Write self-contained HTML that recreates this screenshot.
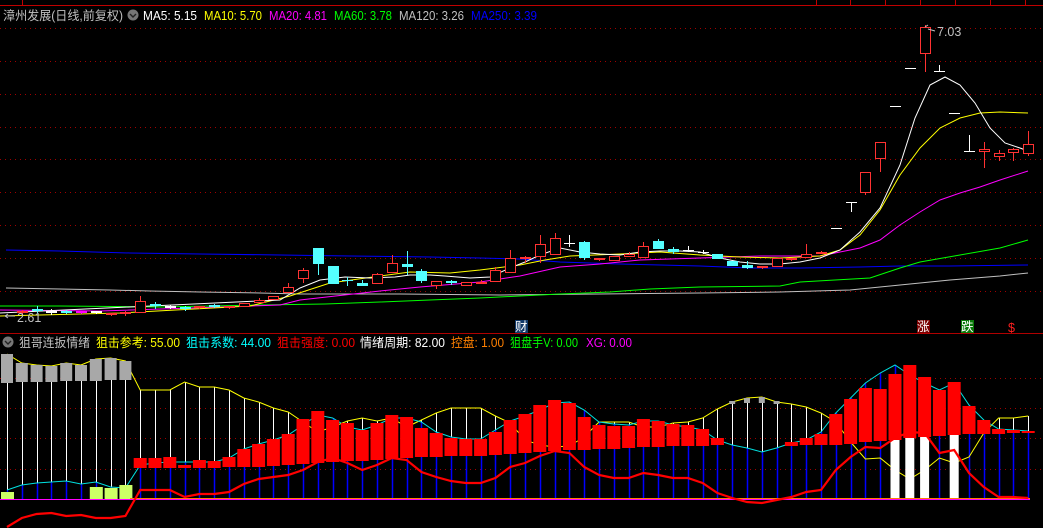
<!DOCTYPE html>
<html><head><meta charset="utf-8"><style>
html,body{margin:0;padding:0;background:#000;width:1043px;height:528px;overflow:hidden}
svg{display:block}
text{font-family:"Liberation Sans","Noto Sans CJK SC",sans-serif;font-size:12.5px}
</style></head><body>
<svg id="s" width="1043" height="528" xmlns="http://www.w3.org/2000/svg">
<rect width="1043" height="528" fill="#000"/>
<g id="g"></g>
<line x1="0" y1="5.5" x2="1043" y2="5.5" stroke="#c00000"/>
<line x1="22.5" y1="0" x2="22.5" y2="5" stroke="#c00000"/>
<g stroke="#c00000"><line x1="816.5" y1="0" x2="816.5" y2="5"/><line x1="850.5" y1="0" x2="850.5" y2="5"/><line x1="885.5" y1="0" x2="885.5" y2="5"/><line x1="920.5" y1="0" x2="920.5" y2="5"/><line x1="955.5" y1="0" x2="955.5" y2="5"/><line x1="990.5" y1="0" x2="990.5" y2="5"/><line x1="1025.5" y1="0" x2="1025.5" y2="5"/></g>
<line x1="0" y1="333.5" x2="1043" y2="333.5" stroke="#b00000"/>
<text x="3" y="20" fill="#c0c0c0" textLength="120" lengthAdjust="spacingAndGlyphs">漳州发展(日线,前复权)</text>
<text x="143" y="20" fill="#fff" textLength="54" lengthAdjust="spacingAndGlyphs">MA5: 5.15</text>
<text x="204" y="20" fill="#ffff00" textLength="58" lengthAdjust="spacingAndGlyphs">MA10: 5.70</text>
<text x="269" y="20" fill="#ff00ff" textLength="58" lengthAdjust="spacingAndGlyphs">MA20: 4.81</text>
<text x="334" y="20" fill="#00ff00" textLength="58" lengthAdjust="spacingAndGlyphs">MA60: 3.78</text>
<text x="399" y="20" fill="#c0c0c0" textLength="65" lengthAdjust="spacingAndGlyphs">MA120: 3.26</text>
<text x="471" y="20" fill="#0000ff" textLength="66" lengthAdjust="spacingAndGlyphs">MA250: 3.39</text>
<text x="19" y="347" fill="#c0c0c0" textLength="71" lengthAdjust="spacingAndGlyphs">狙哥连扳情绪</text>
<text x="96" y="347" fill="#ffff00" textLength="84" lengthAdjust="spacingAndGlyphs">狙击参考: 55.00</text>
<text x="186" y="347" fill="#00ffff" textLength="85" lengthAdjust="spacingAndGlyphs">狙击系数: 44.00</text>
<text x="277" y="347" fill="#ff0000" textLength="78" lengthAdjust="spacingAndGlyphs">狙击强度: 0.00</text>
<text x="360" y="347" fill="#ffffff" textLength="85" lengthAdjust="spacingAndGlyphs">情绪周期: 82.00</text>
<text x="451" y="347" fill="#ff8000" textLength="53" lengthAdjust="spacingAndGlyphs">控盘: 1.00</text>
<text x="510" y="347" fill="#00ff00" textLength="68" lengthAdjust="spacingAndGlyphs">狙盘手V: 0.00</text>
<text x="586" y="347" fill="#ff00ff" textLength="46" lengthAdjust="spacingAndGlyphs">XG: 0.00</text>
<circle cx="133" cy="15" r="5.5" fill="#777"/><path d="M130 14 l3 3 l3 -3" stroke="#222" fill="none" stroke-width="1.4"/>
<circle cx="8" cy="342" r="5.5" fill="#777"/><path d="M5 341 l3 3 l3 -3" stroke="#222" fill="none" stroke-width="1.4"/>
<text x="937" y="36" fill="#c0c0c0">7.03</text>
<path d="M925 27 l3 -2 M928 29 l7 2" stroke="#c0c0c0" fill="none"/>
<text x="17" y="322" fill="#c0c0c0">2.61</text>
<path d="M5 316 h10 M5 316 l3 -2 M5 316 l3 2" stroke="#c0c0c0" fill="none"/>
<rect x="515" y="320" width="13" height="13" fill="#123a6a"/><text x="515" y="331" fill="#fff" font-size="12">财</text>
<rect x="917" y="320" width="13" height="13" fill="#7a0000"/><text x="917" y="331" fill="#fff" font-size="12">涨</text>
<rect x="961" y="320" width="13" height="13" fill="#0a7a0a"/><text x="961" y="331" fill="#fff" font-size="12">跌</text>
<text x="1008" y="332" fill="#ff2020" font-size="12">$</text>
</svg>
<script>
(function(){
var g=document.getElementById('g'),h='';
function X(i){return 7+14.8*i;}
[28,61,94,127,159,192,225,258,291].forEach(function(y){h+='<line x1="0" y1="'+(y+.5)+'" x2="1043" y2="'+(y+.5)+'" stroke="#a00000" stroke-dasharray="1 4"/>';});
[378,408,438,469].forEach(function(y){h+='<line x1="0" y1="'+(y+.5)+'" x2="1043" y2="'+(y+.5)+'" stroke="#a00000" stroke-dasharray="1 4"/>';});
function pl(pts,c,w){h+='<polyline fill="none" stroke="'+c+'" stroke-width="'+(w||1)+'" points="'+pts.map(function(p){return p.join(',')}).join(' ')+'"/>';}
pl([[6,250],[60,251],[130,253],[200,254],[280,255],[350,256],[430,257],[480,258],[520,259],[560,262],[620,264],[700,266],[750,268],[800,268],[860,267],[900,266],[950,266],[1028,265]],'#0000ff');
pl([[6,288],[60,289],[110,290],[150,291],[200,292],[260,293],[300,294],[400,294],[500,295],[600,294],[700,293],[780,292],[850,290],[870,288],[900,285],[950,280],[1000,276],[1028,273]],'#c0c0c0');
pl([[0,306],[60,306],[160,307],[260,305],[325,304],[380,302],[430,300],[480,298],[520,296],[560,294],[610,292],[650,289],[700,287],[780,286],[800,282],[870,278],[900,268],[920,262],[960,255],[1000,248],[1028,240]],'#00ff00');
pl([[0,310],[100,311],[280,305],[300,300],[380,291],[420,287],[480,282],[520,276],[560,267],[600,264],[640,260],[700,258],[760,256],[820,256],[860,248],[880,240],[900,225],[920,212],[940,200],[960,193],[980,187],[1000,180],[1028,171]],'#ff00ff');
pl([[0,316],[120,313],[250,306],[290,296],[330,283],[380,276],[410,272],[450,273],[480,270],[520,265],[545,260],[570,256],[620,254],[660,252],[700,255],[740,257],[780,258],[820,256],[840,250],[860,235],[880,210],[900,175],[920,148],[940,128],[960,118],[980,113],[1000,112],[1028,113]],'#ffff00');
pl([[0,313],[280,300],[300,288],[320,280],[345,277],[370,278],[395,277],[410,275],[430,275],[445,276],[470,278],[490,277],[510,268],[525,262],[540,255],[560,248],[580,252],[600,254],[620,255],[640,252],[660,251],[680,251],[700,252],[720,258],[740,262],[760,264],[780,264],[800,262],[820,258],[840,250],[860,232],[880,208],[900,165],[915,118],[930,85],[945,77],[960,85],[975,103],[990,128],[1005,143],[1020,148],[1028,151]],'#ffffff');
var C=[[1,311,313,310,315,'r'],[2,309,311,306,313,'c'],[3,311,313,309,315,'w'],[4,311,313,310,314,'c'],[5,311,313,311,314,'m'],[6,311,313,311,314,'w'],[7,313,315,313,316,'r'],[8,312,314,311,316,'r'],
[9,301,313,296,313,'r'],[10,304,306,302,309,'c'],[11,306,308,305,309,'w'],[12,307,309,306,311,'c'],[13,306,308,306,309,'r'],[14,305,307,304,308,'c'],[15,306,308,306,309,'r'],[16,303,307,303,307,'r'],[17,300,303,298,303,'r'],[18,296,300,296,300,'r'],[19,287,293,283,293,'r'],[20,270,279,268,283,'r'],[21,248,264,248,275,'c'],[22,266,284,266,284,'c'],[23,280,281,277,286,'c'],[24,283,286,280,286,'c'],[25,274,284,273,284,'r'],[26,263,273,255,273,'r'],[27,264,267,251,275,'c'],[28,271,281,269,283,'c'],[29,281,286,281,289,'r'],[30,281,283,280,285,'c'],[31,282,286,282,286,'r'],[32,282,284,280,284,'r'],[33,270,282,267,282,'r'],[34,258,273,250,273,'r'],
[35,257,259,256,263,'r'],[36,244,257,235,263,'r'],[37,238,255,233,255,'r'],[38,243,244,235,247,'w'],[39,242,258,241,260,'c'],[40,258,260,258,261,'r'],[41,256,261,256,261,'r'],[42,254,257,252,257,'r'],[43,246,258,242,258,'r'],[44,241,249,239,249,'c'],[45,249,252,247,254,'c'],[46,250,251,246,252,'w'],[47,252,253,250,254,'w'],[48,254,259,254,259,'c'],[49,261,266,261,266,'c'],[50,265,268,261,269,'c'],[51,266,268,266,269,'r'],[52,258,267,258,267,'r'],[53,258,260,258,261,'r'],[54,254,258,244,258,'r'],[55,252,254,251,254,'r'],
[56,228,229,228,229,'w'],[57,202,203,202,212,'w'],[58,172,193,172,195,'r'],[59,142,159,142,172,'r'],[60,106,107,106,107,'w'],[61,68,69,68,69,'w'],[62,27,54,25,72,'r'],[63,71,72,65,72,'w'],[64,113,114,113,114,'w'],[65,151,152,135,152,'w'],[66,149,152,142,168,'r'],[67,153,157,150,161,'r'],[68,149,153,148,161,'r'],[69,144,154,131,156,'r']];
var col={r:'#ff3232',c:'#54ffff',w:'#ffffff',m:'#ff00ff'};
C.forEach(function(c){var x=Math.round(X(c[0]))+.5,cl=col[c[5]];
h+='<line x1="'+x+'" y1="'+c[3]+'" x2="'+x+'" y2="'+c[4]+'" stroke="'+cl+'"/>';
var hgt=Math.max(1,c[2]-c[1]);
if(c[5]=='r'&&hgt>2)h+='<rect x="'+(x-5)+'" y="'+(c[1]+.5)+'" width="10" height="'+(hgt-1)+'" fill="#000" stroke="'+cl+'"/>';
else h+='<rect x="'+(x-5.5)+'" y="'+c[1]+'" width="11" height="'+hgt+'" fill="'+cl+'"/>';});
var B=500;
var Y=[354,363,365,366,363,365,359,358,361,390,390,390,382,387,387,390,398,402,408,412,422,432,427,421,418,421,418,427,420,413,408,408,408,416,423,440,445,447,446,437,422,422,422,427,427,423,422,418,409,402,398,397,402,404,407,413,422,442,459,458,470,479,470,458,463,457,433,418,418,416];
var CY=[490,485,483,482,481,484,482,487,488,465,463,462,462,462,462,458,449,444,440,435,425,415,418,427,430,425,418,418,422,432,437,439,439,430,421,416,410,403,402,410,422,424,425,421,421,425,427,430,440,445,448,452,448,443,440,432,413,398,383,373,365,375,383,390,383,405,420,429,430,431];
var R=[527,518,514,513,516,515,518,518,516,490,490,490,497,494,494,492,484,479,477,475,470,462,458,463,470,465,458,460,472,477,481,483,483,478,467,463,456,451,453,467,475,478,478,473,475,478,478,483,493,498,502,503,500,497,492,490,470,457,447,448,438,432,433,453,450,473,487,497,497,498];
var RB={9:[458,468],10:[458,468],11:[457,468],12:[465,468],13:[460,468],14:[461,468],15:[457,467],16:[449,467],17:[444,467],18:[439,466],19:[434,465],20:[419,464],21:[411,463],22:[420,462],23:[423,461],24:[430,461],25:[423,460],26:[415,459],27:[417,458],28:[428,457],29:[433,457],30:[438,456],31:[439,456],32:[439,456],33:[432,455],34:[420,454],35:[414,453],36:[405,452],37:[400,451],38:[403,450],39:[417,450],40:[425,449],41:[426,449],42:[426,448],43:[419,447],44:[421,447],45:[424,446],46:[425,446],47:[429,446],48:[438,445],53:[442,446],54:[438,445],55:[434,445],56:[414,445],57:[399,444],58:[388,442],59:[389,441],60:[374,440],61:[365,438],62:[377,437],63:[390,436],64:[382,435],65:[406,434],66:[420,434],67:[429,434],68:[430,433],69:[431,433]};
for(var i=0;i<70;i++){var x=Math.round(X(i))+.5;
 if(Y[i]<CY[i])h+='<line x1="'+x+'" y1="'+Y[i]+'" x2="'+x+'" y2="'+CY[i]+'" stroke="#fff"/>';
 var bt=Math.min(CY[i],RB[i]?RB[i][1]:999);
 h+='<line x1="'+x+'" y1="'+bt+'" x2="'+x+'" y2="'+B+'" stroke="#0000ff" stroke-width="1.5"/>';}
pl(Y.map(function(v,i){return [X(i),v]}),'#ffff00');
pl(CY.map(function(v,i){return [X(i),v]}),'#00e0e0');
[[0,354,383],[1,363,382],[2,365,382],[3,366,382],[4,363,381],[5,365,381],[6,359,381],[7,358,380],[8,361,380]].forEach(function(b){h+='<rect x="'+(X(b[0])-6)+'" y="'+b[1]+'" width="12" height="'+(b[2]-b[1])+'" fill="#a8a8a8"/>';});
[[49,401,404],[50,398,403],[51,397,403],[52,401,404]].forEach(function(b){h+='<rect x="'+(X(b[0])-3)+'" y="'+b[1]+'" width="6" height="'+(b[2]-b[1])+'" fill="#a8a8a8"/>';});
[[0,492],[6,487],[7,488],[8,485]].forEach(function(b){h+='<rect x="'+(X(b[0])-6)+'" y="'+b[1]+'" width="13" height="'+(B-b[1])+'" fill="#ccff66"/>';});
for(var k in RB){h+='<rect x="'+(X(+k)-6.5)+'" y="'+RB[k][0]+'" width="13" height="'+(RB[k][1]-RB[k][0])+'" fill="#ff0000"/>';}
[[60,440],[61,438],[62,437],[64,435]].forEach(function(b){h+='<rect x="'+(X(b[0])-4.5)+'" y="'+b[1]+'" width="9" height="'+(B-b[1])+'" fill="#fff"/>';});
h+='<line x1="0" y1="499.5" x2="1030" y2="499.5" stroke="#ff00ff"/>';
h+='<line x1="130" y1="498.5" x2="1030" y2="498.5" stroke="#ff8000"/>';
pl(R.map(function(v,i){return [X(i),v]}),'#ff0000',2.2);
g.innerHTML=h;
})();
</script>
</body></html>
